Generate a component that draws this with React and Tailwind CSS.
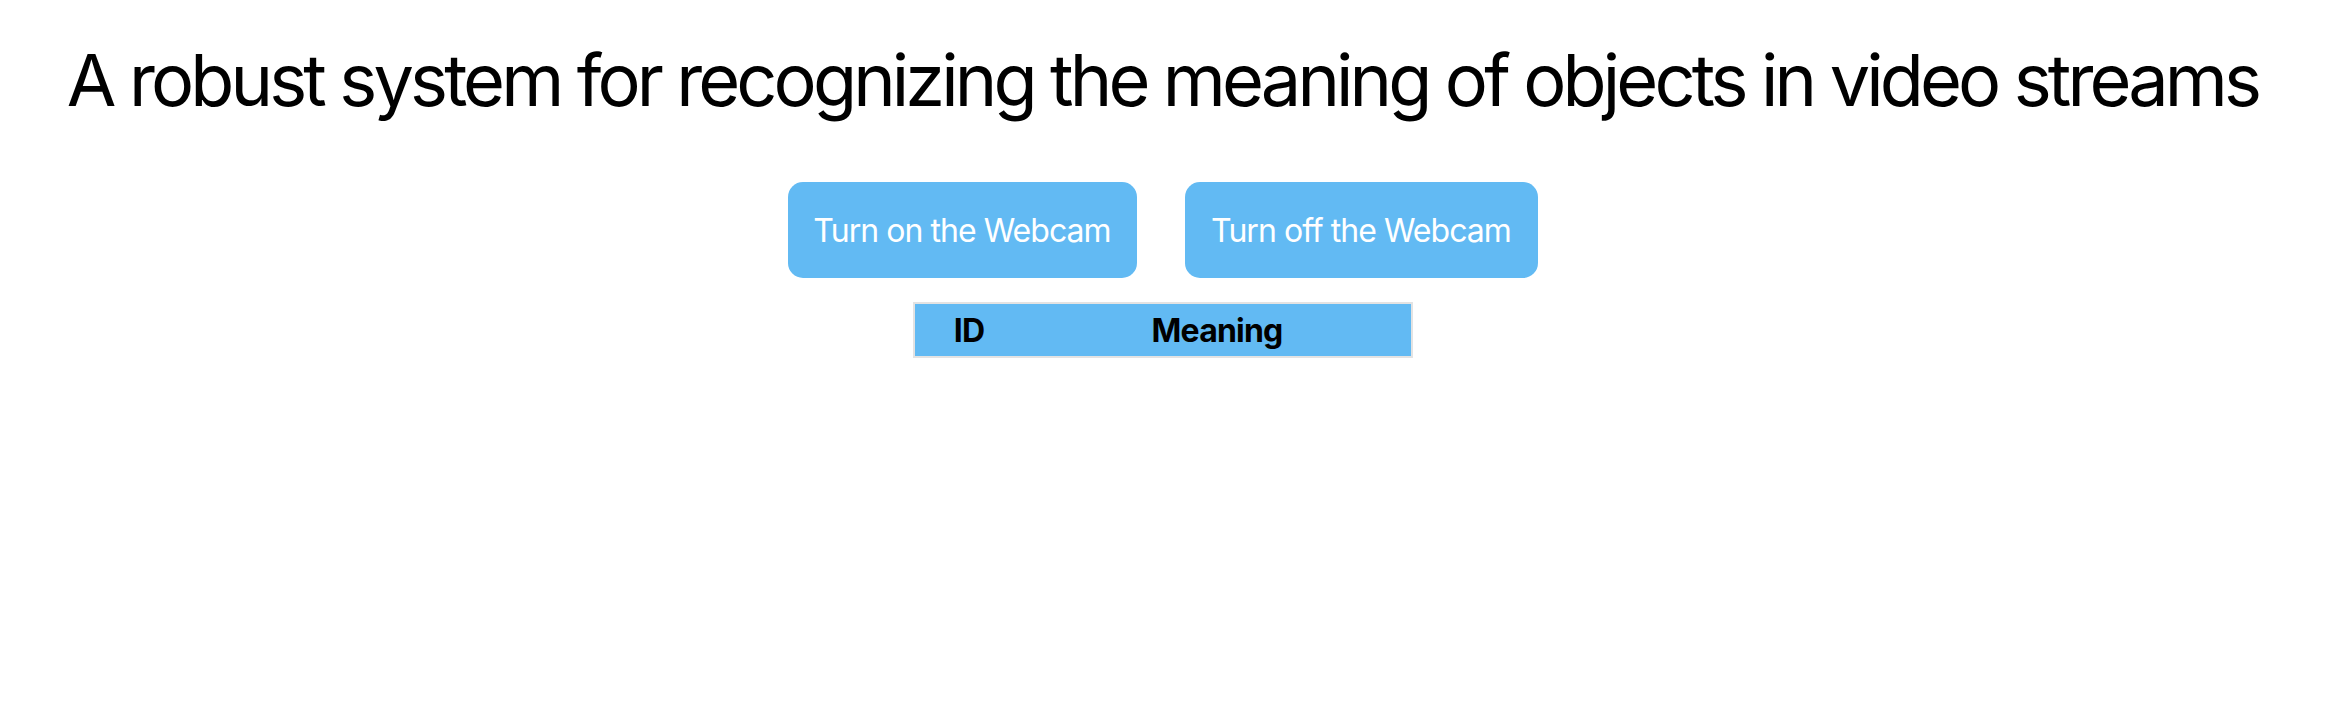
export default function App() {
  return (
    <div className="min-h-[725px] bg-white pr-[18px] font-['Inter','Noto_Sans',sans-serif] text-black">
      <div className="flex flex-col items-center">
        <h1 className="mt-[44px] whitespace-nowrap text-[72px] font-normal leading-none tracking-[-0.054em]">
          A robust system for recognizing the meaning of objects in video streams
        </h1>

        <div className="mt-[66px] flex gap-[48px]">
          <button className="h-[96px] w-[349px] rounded-[15px] bg-[#62baf3] pt-[2px] text-[32px] font-normal tracking-[-0.03em] text-white">
            Turn on the Webcam
          </button>
          <button className="h-[96px] w-[353px] rounded-[15px] bg-[#62baf3] pt-[2px] text-[32px] font-normal tracking-[-0.03em] text-white">
            Turn off the Webcam
          </button>
        </div>

        <table className="mt-[24px] w-[500px] border-2 border-[#e3e3e3] bg-[#62baf3]">
          <thead>
            <tr className="h-[54px]">
              <th className="w-[110px] pt-[2px] text-center text-[32px] font-bold tracking-[-0.025em]">ID</th>
              <th className="pt-[2px] text-center text-[32px] font-bold tracking-[-0.025em]">Meaning</th>
            </tr>
          </thead>
          <tbody></tbody>
        </table>
      </div>
    </div>
  );
}
